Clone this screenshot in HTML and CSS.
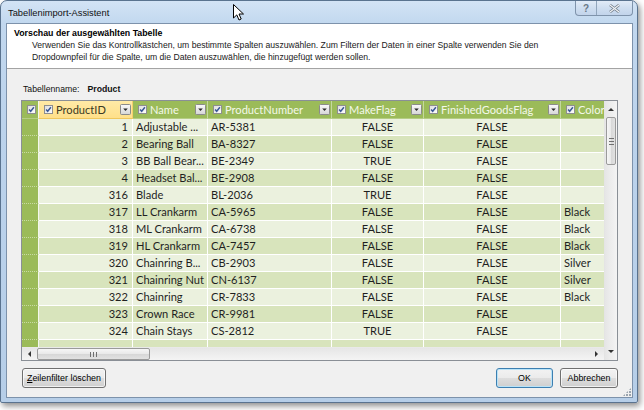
FILE: index.html
```html
<!DOCTYPE html>
<html lang="de">
<head>
<meta charset="utf-8">
<title>Tabellenimport-Assistent</title>
<link rel="stylesheet" href="styles.css">
</head>
<body>
<svg class="defs" width="0" height="0" aria-hidden="true">
  <defs>
    <linearGradient id="gchk" x1="0" y1="0" x2="1" y2="1">
      <stop offset="0" stop-color="#dcdcdc"/>
      <stop offset="1" stop-color="#ffffff"/>
    </linearGradient>
    <linearGradient id="gdd" x1="0" y1="0" x2="0" y2="1">
      <stop offset="0" stop-color="#fafafa"/>
      <stop offset="1" stop-color="#d5d5d5"/>
    </linearGradient>
    <symbol id="chk" viewBox="0 0 9 9">
      <rect x="0.5" y="0.5" width="8" height="8" fill="url(#gchk)" stroke="#8e8f8f"/>
      <path d="M2.1 4.4 L3.7 6.3 L6.9 2.2" stroke="#3a5896" stroke-width="1.5" fill="none"/>
    </symbol>
    <symbol id="dd" viewBox="0 0 11 11">
      <rect x="0.5" y="0.5" width="10" height="10" rx="1" fill="url(#gdd)" stroke="#8b8b8b"/>
      <path d="M3.2 4.5 H7.8 L5.5 6.9 Z" fill="#2b2b2b"/>
    </symbol>
  </defs>
</svg>

<div class="window">
  <div class="titlebar">
    <span class="title">Tabellenimport-Assistent</span>
    <div class="caption-btns">
      <span class="cbtn help">?</span>
      <span class="cbtn close">
        <svg width="11" height="9" viewBox="0 0 11 9"><path d="M1 1 L10 8 M10 1 L1 8" stroke="#6f7a86" stroke-width="2.6"/><path d="M1 1 L10 8 M10 1 L1 8" stroke="#f2f4f7" stroke-width="1.1"/></svg>
      </span>
    </div>
  </div>

  <div class="client">
    <div class="banner">
      <div class="banner-title">Vorschau der ausgewählten Tabelle</div>
      <div class="banner-text">Verwenden Sie das Kontrollkästchen, um bestimmte Spalten auszuwählen. Zum Filtern der Daten in einer Spalte verwenden Sie den<br>Dropdownpfeil für die Spalte, um die Daten auszuwählen, die hinzugefügt werden sollen.</div>
    </div>

    <div class="content">
      <div class="tname"><span class="tlabel">Tabellenname:</span><span class="tvalue">Product</span></div>

      <div class="gridbox">
        <div class="gridmain">
          <div class="table">
            <div class="row head">
              <div class="sel hsel"><svg class="cb"><use href="#chk"/></svg></div>
              <div class="hc active"><svg class="cb"><use href="#chk"/></svg><span class="ht">ProductID</span><svg class="ddb"><use href="#dd"/></svg></div>
              <div class="hc"><svg class="cb"><use href="#chk"/></svg><span class="ht">Name</span><svg class="ddb"><use href="#dd"/></svg></div>
              <div class="hc"><svg class="cb"><use href="#chk"/></svg><span class="ht">ProductNumber</span><svg class="ddb"><use href="#dd"/></svg></div>
              <div class="hc"><svg class="cb"><use href="#chk"/></svg><span class="ht">MakeFlag</span><svg class="ddb"><use href="#dd"/></svg></div>
              <div class="hc"><svg class="cb"><use href="#chk"/></svg><span class="ht">FinishedGoodsFlag</span><svg class="ddb"><use href="#dd"/></svg></div>
              <div class="hc"><svg class="cb"><use href="#chk"/></svg><span class="ht">Color</span></div>
            </div>

            <div class="row"><div class="sel"></div><div class="c num">1</div><div class="c">Adjustable ...</div><div class="c">AR-5381</div><div class="c ctr">FALSE</div><div class="c ctr">FALSE</div><div class="c"></div></div>
            <div class="row"><div class="sel"></div><div class="c num">2</div><div class="c">Bearing Ball</div><div class="c">BA-8327</div><div class="c ctr">FALSE</div><div class="c ctr">FALSE</div><div class="c"></div></div>
            <div class="row"><div class="sel"></div><div class="c num">3</div><div class="c">BB Ball Bear...</div><div class="c">BE-2349</div><div class="c ctr">TRUE</div><div class="c ctr">FALSE</div><div class="c"></div></div>
            <div class="row"><div class="sel"></div><div class="c num">4</div><div class="c">Headset Bal...</div><div class="c">BE-2908</div><div class="c ctr">FALSE</div><div class="c ctr">FALSE</div><div class="c"></div></div>
            <div class="row"><div class="sel"></div><div class="c num">316</div><div class="c">Blade</div><div class="c">BL-2036</div><div class="c ctr">TRUE</div><div class="c ctr">FALSE</div><div class="c"></div></div>
            <div class="row"><div class="sel"></div><div class="c num">317</div><div class="c">LL Crankarm</div><div class="c">CA-5965</div><div class="c ctr">FALSE</div><div class="c ctr">FALSE</div><div class="c">Black</div></div>
            <div class="row"><div class="sel"></div><div class="c num">318</div><div class="c">ML Crankarm</div><div class="c">CA-6738</div><div class="c ctr">FALSE</div><div class="c ctr">FALSE</div><div class="c">Black</div></div>
            <div class="row"><div class="sel"></div><div class="c num">319</div><div class="c">HL Crankarm</div><div class="c">CA-7457</div><div class="c ctr">FALSE</div><div class="c ctr">FALSE</div><div class="c">Black</div></div>
            <div class="row"><div class="sel"></div><div class="c num">320</div><div class="c">Chainring B...</div><div class="c">CB-2903</div><div class="c ctr">FALSE</div><div class="c ctr">FALSE</div><div class="c">Silver</div></div>
            <div class="row"><div class="sel"></div><div class="c num">321</div><div class="c">Chainring Nut</div><div class="c">CN-6137</div><div class="c ctr">FALSE</div><div class="c ctr">FALSE</div><div class="c">Silver</div></div>
            <div class="row"><div class="sel"></div><div class="c num">322</div><div class="c">Chainring</div><div class="c">CR-7833</div><div class="c ctr">FALSE</div><div class="c ctr">FALSE</div><div class="c">Black</div></div>
            <div class="row"><div class="sel"></div><div class="c num">323</div><div class="c">Crown Race</div><div class="c">CR-9981</div><div class="c ctr">FALSE</div><div class="c ctr">FALSE</div><div class="c"></div></div>
            <div class="row"><div class="sel"></div><div class="c num">324</div><div class="c">Chain Stays</div><div class="c">CS-2812</div><div class="c ctr">TRUE</div><div class="c ctr">FALSE</div><div class="c"></div></div>
            <div class="row"><div class="sel"></div><div class="c"></div><div class="c"></div><div class="c"></div><div class="c"></div><div class="c"></div><div class="c"></div></div>
          </div>

          <div class="hscroll">
            <div class="sbtn"><svg width="4" height="6" viewBox="0 0 4 6"><path d="M4 0 V6 L1 3 Z" fill="#333"/></svg></div>
            <div class="hthumb"><span class="grip-h"></span></div>
            <div class="strack"></div>
            <div class="sbtn"><svg width="4" height="6" viewBox="0 0 4 6"><path d="M0 0 V6 L3 3 Z" fill="#333"/></svg></div>
          </div>
        </div>

        <div class="vscroll">
          <div class="vbtn"><svg width="6" height="4" viewBox="0 0 6 4"><path d="M0 4 H6 L3 1 Z" fill="#333"/></svg></div>
          <div class="vthumb"><span class="grip-v"></span></div>
          <div class="strack"></div>
          <div class="vbtn"><svg width="6" height="4" viewBox="0 0 6 4"><path d="M0 0 H6 L3 3 Z" fill="#333"/></svg></div>
        </div>
      </div>

      <div class="actions">
        <button class="btn btn-wide"><u>Z</u>eilenfilter löschen</button>
        <span class="spacer"></span>
        <button class="btn btn-ok">OK</button>
        <button class="btn btn-cancel">Abbrechen</button>
      </div>
    </div>
    <span class="resize-grip"></span>
  </div>
</div>

<svg class="cursor" width="12" height="18" viewBox="0 0 12 18">
  <path d="M0.5 0.5 V14 L3.8 10.9 L6 16 L8.2 15 L6 10 H10.5 Z" fill="#fff" stroke="#000" stroke-width="1"/>
</svg>
</body>
</html>
```

FILE: styles.css
```css
* { box-sizing: border-box; }

html, body {
  margin: 0;
  padding: 0;
}

body {
  width: 644px;
  height: 410px;
  background: #ffffff;
  font-family: "Liberation Sans", Arial, sans-serif;
  position: relative;
  overflow: hidden;
}

.defs {
  position: absolute;
  width: 0;
  height: 0;
}

/* ---------- window frame ---------- */
.window {
  width: 638px;
  height: 403px;
  border: 1px solid #5a738f;
  border-radius: 7px 7px 2px 2px;
  background: linear-gradient(180deg, #d3e3f5 0px, #c2d8ef 22px, #bcd3ec 120px, #b6cee8 100%);
  padding: 0 4px 4px 5px;
  display: flex;
  flex-direction: column;
  box-shadow: 2px 3px 6px rgba(0, 0, 0, 0.45);
}

.titlebar {
  height: 22px;
  display: flex;
  align-items: flex-start;
}

.title {
  font-size: 9.3px;
  color: #111;
  padding: 6px 0 0 2px;
  line-height: 12px;
}

.caption-btns {
  margin-left: auto;
  display: flex;
  height: 15px;
  border: 1px solid #7f93ab;
  border-top: none;
  border-radius: 0 0 4px 4px;
  overflow: hidden;
  background: linear-gradient(180deg, #e1ebf7 0%, #cfdef0 50%, #c2d4eb 100%);
}

.cbtn {
  display: flex;
  align-items: center;
  justify-content: center;
  height: 100%;
}

.help {
  width: 21px;
  border-right: 1px solid #91a5bc;
  font-size: 10px;
  font-weight: bold;
  color: #6a7886;
}

.close {
  width: 35px;
}

/* ---------- client ---------- */
.client {
  flex: 1;
  background: #f0f0f0;
  border: 1px solid #7d92ab;
  display: flex;
  flex-direction: column;
  position: relative;
}

.banner {
  background: #ffffff;
  border-bottom: 1px solid #a3a3a3;
  padding: 3px 7px 5px 7px;
  height: 45px;
}

.banner-title {
  font-size: 8.8px;
  font-weight: bold;
  line-height: 12px;
  color: #000;
}

.banner-text {
  padding-left: 18px;
  font-size: 8.65px;
  line-height: 12px;
  color: #1a1a1a;
  white-space: nowrap;
}

.content {
  flex: 1;
  padding: 14px 14px 0 14px;
  display: flex;
  flex-direction: column;
}

.tname {
  height: 12px;
  line-height: 12px;
  font-size: 8.7px;
  color: #111;
  padding-left: 2px;
  margin-bottom: 5px;
  display: flex;
  gap: 8px;
}

.tvalue {
  font-weight: bold;
}

/* ---------- grid ---------- */
.gridbox {
  height: 261px;
  border: 1px solid #8a8f96;
  display: flex;
  background: #fff;
}

.gridmain {
  width: 582px;
  display: flex;
  flex-direction: column;
  min-width: 0;
}

.table {
  flex: 1;
  overflow: hidden;
  font-family: Lato, "Open Sans", sans-serif;
  font-size: 11.1px;
  color: #1f1f1f;
}

.row {
  display: grid;
  grid-template-columns: 17px 94px 75px 124px 92px 137px 70px;
  height: 17px;
  background: #ebf1de;
}

.row:nth-child(odd) {
  background: #d8e4bc;
}

.row.head {
  height: 18px;
  background: #9bbb59;
}

.sel {
  background: #9bbb59;
  border-right: 1px solid #f4f8ec;
  border-bottom: 1px dotted #c9dba5;
}

.hsel {
  display: flex;
  align-items: center;
  padding-left: 5px;
  border-bottom: 1px solid #b5cd85;
}

.c {
  border-right: 1px solid #ffffff;
  border-bottom: 1px solid #ffffff;
  padding: 0 3px;
  line-height: 16px;
  white-space: nowrap;
  overflow: hidden;
}

.num {
  text-align: right;
  padding-right: 4px;
}

.ctr {
  text-align: center;
}

.hc {
  display: flex;
  align-items: center;
  padding: 0 1px 0 5px;
  border-right: 1px solid #c5d89f;
  border-bottom: 1px solid #b5cd85;
  color: #f3f8ea;
  white-space: nowrap;
  overflow: hidden;
}

.hc.active {
  background: linear-gradient(180deg, #ffeaa6 0%, #ffe08a 100%);
  color: #3a3a24;
  border-right-color: #f5cf6e;
  border-bottom-color: #f0c75c;
}

.cb {
  width: 9px;
  height: 9px;
  flex: none;
}

.ht {
  margin-left: 3px;
  line-height: 16px;
}

.ddb {
  width: 11px;
  height: 11px;
  flex: none;
  margin-left: auto;
}

/* ---------- scrollbars ---------- */
.hscroll {
  height: 13px;
  display: flex;
  background: linear-gradient(180deg, #e6e6e6 0%, #f4f4f4 100%);
  border-top: 1px solid #e9e9e9;
}

.sbtn {
  width: 14px;
  display: flex;
  align-items: center;
  justify-content: center;
}

.hthumb {
  width: 113px;
  margin: 0 0 0 1px;
  border: 1px solid #9a9a9a;
  border-radius: 2px;
  background: linear-gradient(180deg, #f6f6f6 0%, #e9e9e9 50%, #d7d7d7 51%, #e2e2e2 100%);
  display: flex;
  align-items: center;
  justify-content: center;
}

.grip-h {
  width: 7px;
  height: 5px;
  background: repeating-linear-gradient(90deg, #707070 0 1px, transparent 1px 3px);
}

.strack {
  flex: 1;
}

.vscroll {
  width: 13px;
  display: flex;
  flex-direction: column;
  background: linear-gradient(90deg, #e6e6e6 0%, #f4f4f4 100%);
  border-left: 1px solid #e4e4e4;
}

.vbtn {
  height: 16px;
  display: flex;
  align-items: center;
  justify-content: center;
}

.vthumb {
  height: 48px;
  margin: 0 1px 0 1px;
  border: 1px solid #9a9a9a;
  border-radius: 2px;
  background: linear-gradient(90deg, #f6f6f6 0%, #e9e9e9 50%, #d7d7d7 51%, #e2e2e2 100%);
  display: flex;
  align-items: center;
  justify-content: center;
}

.grip-v {
  width: 5px;
  height: 7px;
  background: repeating-linear-gradient(180deg, #707070 0 1px, transparent 1px 3px);
}

/* ---------- buttons ---------- */
.actions {
  margin-top: 7px;
  display: flex;
  gap: 7px;
  padding-left: 1px;
}

.spacer {
  flex: 1;
}

.btn {
  height: 20px;
  padding: 0;
  font-family: "Liberation Sans", Arial, sans-serif;
  font-size: 8.9px;
  color: #000;
  border: 1px solid #707070;
  border-radius: 3px;
  background: linear-gradient(180deg, #f2f2f2 0%, #ebebeb 48%, #dddddd 52%, #cfcfcf 100%);
  box-shadow: inset 0 0 0 1px rgba(255, 255, 255, 0.7);
}

.btn u {
  text-decoration: underline;
}

.btn-wide {
  width: 84px;
}

.btn-ok {
  width: 57px;
  border-color: #3c7fb1;
  box-shadow: inset 0 0 0 1px #b9e3f8;
}

.btn-cancel {
  width: 58px;
}

.resize-grip {
  position: absolute;
  right: 1px;
  bottom: 1px;
  width: 8px;
  height: 8px;
  background:
    radial-gradient(circle at 1px 1px, #9aa4ae 0.9px, transparent 1.1px) 0 0 / 3px 3px;
  clip-path: polygon(100% 0, 100% 100%, 0 100%);
}

.cursor {
  position: absolute;
  left: 233px;
  top: 4px;
}
```
